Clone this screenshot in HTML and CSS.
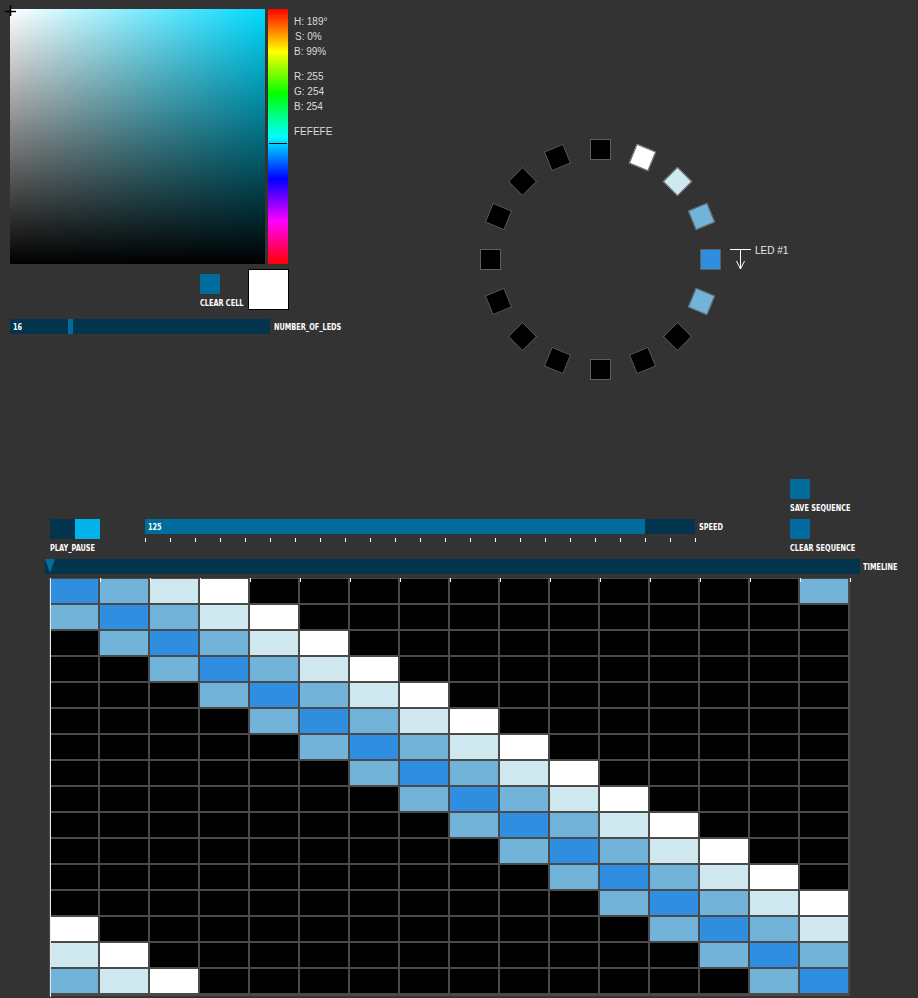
FILE: index.html
```html
<!DOCTYPE html>
<html>
<head>
<meta charset="utf-8">
<link rel="stylesheet" href="styles.css">
</head>
<body>
<div class="app">
  <section class="top">
    <div class="picker">
      <div class="picker-main">
        <div class="sb">
          <svg class="cross" width="13" height="13" viewBox="0 0 13 13"><path d="M1 7.5H12M6.5 1V12" stroke="#000" stroke-width="1.5" fill="none"/></svg>
        </div>
        <div class="hue"><div class="hue-mark"></div></div>
        <div class="info">
          <div class="grp"><div>H: 189°</div><div class="ind">S: 0%</div><div>B: 99%</div></div>
          <div class="grp"><div>R: 255</div><div>G: 254</div><div>B: 254</div></div>
          <div class="grp"><div>FEFEFE</div></div>
        </div>
      </div>
      <div class="picker-bottom">
        <div class="clear-cell"><div class="btn"></div><span class="cp5">CLEAR CELL</span></div>
        <div class="preview"></div>
      </div>
      <div class="slider-row">
        <div class="slider leds"><div class="handle"></div><span class="cp5 val">16</span></div>
        <span class="cp5">NUMBER_OF_LEDS</span>
      </div>
    </div>
    <div class="ring">
      <div class="led b" style="--x:219.5px;--y:109.5px;--a:0deg"></div>
      <div class="led l" style="--x:211.13px;--y:67.4px;--a:-22.5deg"></div>
      <div class="led v" style="--x:187.28px;--y:31.72px;--a:-45deg"></div>
      <div class="led w" style="--x:151.6px;--y:7.87px;--a:-67.5deg"></div>
      <div class="led" style="--x:109.5px;--y:-0.5px;--a:-90deg"></div>
      <div class="led" style="--x:67.4px;--y:7.87px;--a:-112.5deg"></div>
      <div class="led" style="--x:31.72px;--y:31.72px;--a:-135deg"></div>
      <div class="led" style="--x:7.87px;--y:67.4px;--a:-157.5deg"></div>
      <div class="led" style="--x:-0.5px;--y:109.5px;--a:-180deg"></div>
      <div class="led" style="--x:7.87px;--y:151.6px;--a:-202.5deg"></div>
      <div class="led" style="--x:31.72px;--y:187.28px;--a:-225deg"></div>
      <div class="led" style="--x:67.4px;--y:211.13px;--a:-247.5deg"></div>
      <div class="led" style="--x:109.5px;--y:219.5px;--a:-270deg"></div>
      <div class="led" style="--x:151.6px;--y:211.13px;--a:-292.5deg"></div>
      <div class="led" style="--x:187.28px;--y:187.28px;--a:-315deg"></div>
      <div class="led l" style="--x:211.13px;--y:151.6px;--a:-337.5deg"></div>
      <div class="led-tag">
        <svg width="21" height="21" viewBox="0 0 21 21"><path d="M0 0.5H21M10.5 0.5V20M6.5 12L10.5 20L14.5 12" stroke="#fff" stroke-width="1" fill="none"/></svg>
        <span>LED #1</span>
      </div>
    </div>
  </section>

  <section class="bottom">
    <div class="controls">
      <div class="pp">
        <div class="toggle"><div class="off"></div><div class="on"></div></div>
        <span class="cp5">PLAY_PAUSE</span>
      </div>
      <div class="speed">
        <div class="slider-row speed-row">
          <div class="slider speed-bar"><div class="fill" style="width:500px"></div><span class="cp5 val">125</span></div>
          <span class="cp5">SPEED</span>
        </div>
        <div class="ticks"></div>
      </div>
      <div class="seq">
        <div class="btn"></div>
        <span class="cp5">SAVE SEQUENCE</span>
        <div class="btn second"></div>
        <span class="cp5">CLEAR SEQUENCE</span>
      </div>
    </div>
    <div class="timeline-row">
      <div class="timeline"><div class="thumb"></div></div>
      <span class="cp5">TIMELINE</span>
    </div>
    <div class="grid-wrap">
      <div class="grid">
        <span class="b"></span><span class="l"></span><span class="v"></span><span class="w"></span><span></span><span></span><span></span><span></span><span></span><span></span><span></span><span></span><span></span><span></span><span></span><span class="l"></span>
        <span class="l"></span><span class="b"></span><span class="l"></span><span class="v"></span><span class="w"></span><span></span><span></span><span></span><span></span><span></span><span></span><span></span><span></span><span></span><span></span><span></span>
        <span></span><span class="l"></span><span class="b"></span><span class="l"></span><span class="v"></span><span class="w"></span><span></span><span></span><span></span><span></span><span></span><span></span><span></span><span></span><span></span><span></span>
        <span></span><span></span><span class="l"></span><span class="b"></span><span class="l"></span><span class="v"></span><span class="w"></span><span></span><span></span><span></span><span></span><span></span><span></span><span></span><span></span><span></span>
        <span></span><span></span><span></span><span class="l"></span><span class="b"></span><span class="l"></span><span class="v"></span><span class="w"></span><span></span><span></span><span></span><span></span><span></span><span></span><span></span><span></span>
        <span></span><span></span><span></span><span></span><span class="l"></span><span class="b"></span><span class="l"></span><span class="v"></span><span class="w"></span><span></span><span></span><span></span><span></span><span></span><span></span><span></span>
        <span></span><span></span><span></span><span></span><span></span><span class="l"></span><span class="b"></span><span class="l"></span><span class="v"></span><span class="w"></span><span></span><span></span><span></span><span></span><span></span><span></span>
        <span></span><span></span><span></span><span></span><span></span><span></span><span class="l"></span><span class="b"></span><span class="l"></span><span class="v"></span><span class="w"></span><span></span><span></span><span></span><span></span><span></span>
        <span></span><span></span><span></span><span></span><span></span><span></span><span></span><span class="l"></span><span class="b"></span><span class="l"></span><span class="v"></span><span class="w"></span><span></span><span></span><span></span><span></span>
        <span></span><span></span><span></span><span></span><span></span><span></span><span></span><span></span><span class="l"></span><span class="b"></span><span class="l"></span><span class="v"></span><span class="w"></span><span></span><span></span><span></span>
        <span></span><span></span><span></span><span></span><span></span><span></span><span></span><span></span><span></span><span class="l"></span><span class="b"></span><span class="l"></span><span class="v"></span><span class="w"></span><span></span><span></span>
        <span></span><span></span><span></span><span></span><span></span><span></span><span></span><span></span><span></span><span></span><span class="l"></span><span class="b"></span><span class="l"></span><span class="v"></span><span class="w"></span><span></span>
        <span></span><span></span><span></span><span></span><span></span><span></span><span></span><span></span><span></span><span></span><span></span><span class="l"></span><span class="b"></span><span class="l"></span><span class="v"></span><span class="w"></span>
        <span class="w"></span><span></span><span></span><span></span><span></span><span></span><span></span><span></span><span></span><span></span><span></span><span></span><span class="l"></span><span class="b"></span><span class="l"></span><span class="v"></span>
        <span class="v"></span><span class="w"></span><span></span><span></span><span></span><span></span><span></span><span></span><span></span><span></span><span></span><span></span><span></span><span class="l"></span><span class="b"></span><span class="l"></span>
        <span class="l"></span><span class="v"></span><span class="w"></span><span></span><span></span><span></span><span></span><span></span><span></span><span></span><span></span><span></span><span></span><span></span><span class="l"></span><span class="b"></span>
      </div>
      <div class="grid-ticks"></div>
      <div class="playhead"></div>
    </div>
  </section>
</div>
</body>
</html>
```

FILE: styles.css
```css
* { box-sizing: border-box; margin: 0; padding: 0; }
html, body { background: #333333; }
body {
  width: 918px;
  height: 998px;
  overflow: hidden;
  font-family: "Liberation Sans", Arial, sans-serif;
  color: #dcdcdc;
}
.app { display: flex; flex-direction: column; width: 918px; height: 998px; }

/* ---------- top ---------- */
.top { display: flex; height: 479px; flex: none; }
.picker { width: 470px; padding: 9px 0 0 10px; display: flex; flex-direction: column; }
.picker-main { display: flex; height: 255px; }
.sb {
  position: relative;
  width: 255px;
  height: 255px;
  background:
    linear-gradient(to bottom, rgba(0,0,0,0), #000),
    linear-gradient(to right, #fff, #00d9ff);
}
.cross { position: absolute; left: -6px; top: -5px; overflow: visible; }
.hue {
  position: relative;
  width: 20px;
  height: 255px;
  margin-left: 3px;
  background: linear-gradient(to bottom, #f00 0%, #ff0 16.667%, #0f0 33.333%, #0ff 50%, #00f 66.667%, #f0f 83.333%, #f00 100%);
}
.hue-mark { position: absolute; left: 1px; right: 1px; top: 134px; height: 1px; background: #000; }
.info {
  margin-left: 6px;
  padding-top: 5px;
  display: flex;
  flex-direction: column;
  gap: 10px;
  font-size: 10px;
  line-height: 15px;
  color: #dcdcdc;
}
.info .ind { padding-left: 1px; }

.picker-bottom { display: flex; margin-top: 5px; padding-left: 190px; height: 41px; }
.clear-cell { width: 48px; padding-top: 5px; display: flex; flex-direction: column; align-items: flex-start; }
.btn { width: 20px; height: 20px; background: #016c9e; flex: none; }
.preview { width: 41px; height: 41px; background: #fff; border: 1px solid #000; }

.cp5 {
  display: inline-block;
  font-family: "DejaVu Sans", sans-serif;
  font-weight: bold;
  font-size: 9.5px;
  line-height: 11px;
  color: #fff;
  transform: scaleX(0.69);
  transform-origin: 0 50%;
  white-space: nowrap;
}
.clear-cell .cp5 { margin-top: 3px; }

.slider-row { display: flex; align-items: center; gap: 4px; margin-top: 9px; height: 15px; }
.slider { position: relative; height: 15px; background: #02344d; display: flex; align-items: center; padding-left: 3px; flex: none; }
.slider .val { position: relative; }
.leds { width: 260px; }
.handle { position: absolute; left: 58px; top: 0; width: 5px; height: 15px; background: #016c9e; }

.ring { position: relative; width: 240px; height: 240px; margin: 139px 0 0 10px; }
.led {
  position: absolute;
  left: var(--x);
  top: var(--y);
  width: 21px;
  height: 21px;
  background: #000;
  border: 1px solid #5e5e5e;
  transform: rotate(var(--a));
}
.led-tag {
  position: absolute;
  left: 250px;
  top: 106px;
  display: flex;
  align-items: flex-start;
  gap: 4px;
  font-size: 10px;
  line-height: 12px;
  color: #e6e6e6;
  white-space: nowrap;
}
.led-tag svg { margin-top: 4px; flex: none; }

/* colours */
.b { background: #2f8ee0; }
.l { background: #72b4d9; }
.v { background: #cfe7ee; }
.w { background: #ffffff; }

/* ---------- bottom ---------- */
.bottom { display: flex; flex-direction: column; }
.controls { display: flex; height: 80px; padding-left: 50px; }
.pp { width: 95px; padding-top: 40px; display: flex; flex-direction: column; align-items: flex-start; }
.toggle { display: flex; width: 50px; height: 20px; }
.toggle .off { width: 25px; background: #02344d; }
.toggle .on { width: 25px; background: #00b4ea; }
.pp .cp5 { margin-top: 3px; }

.speed { width: 645px; padding-top: 40px; }
.speed-row { margin-top: 0; }
.speed-bar { width: 550px; }
.fill { position: absolute; left: 0; top: 0; bottom: 0; background: #016c9e; }
.ticks {
  margin-top: 4px;
  width: 551px;
  height: 4px;
  background: repeating-linear-gradient(to right, #fff 0 1px, transparent 1px 25px);
}

.seq { display: flex; flex-direction: column; align-items: flex-start; }
.seq .cp5 { margin-top: 3px; }
.seq .second { margin-top: 6px; }

.timeline-row { display: flex; align-items: center; gap: 3px; margin-left: 45px; height: 15px; }
.timeline { width: 815px; height: 15px; background: #02344d; flex: none; }
.thumb {
  width: 0;
  height: 0;
  border-left: 5px solid transparent;
  border-right: 5px solid transparent;
  border-top: 14px solid #016c9e;
}

.grid-wrap { position: relative; margin: 4px 0 0 49px; width: 801px; }
.grid {
  display: grid;
  grid-template-columns: repeat(16, 48px);
  grid-auto-rows: 24px;
  gap: 2px;
  padding: 1px 2px 3px 1px;
  background: #4a4a4a;
}
.grid span { background-color: #000; }
.grid span.b { background: #2f8ee0; }
.grid span.l { background: #72b4d9; }
.grid span.v { background: #cfe7ee; }
.grid span.w { background: #fff; }
.grid-ticks {
  position: absolute;
  left: 1px;
  top: 0;
  width: 801px;
  height: 4px;
  background: repeating-linear-gradient(to right, #fff 0 1px, transparent 1px 50px);
}
.playhead { position: absolute; left: 1px; top: 0; width: 1px; height: 419px; background: #e8e8e8; }
```
